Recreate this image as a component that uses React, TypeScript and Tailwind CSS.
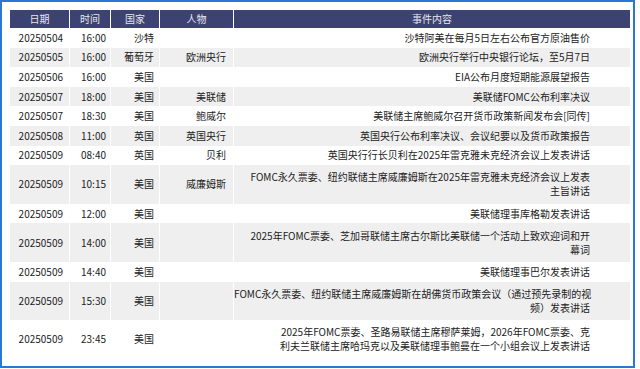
import React from "react"

type Row = {
  date: string
  time: string
  country: string
  person: string
  event: string[]
}

const rows: Row[] = [
  { date: "20250504", time: "16:00", country: "沙特", person: "", event: ["沙特阿美在每月5日左右公布官方原油售价"] },
  { date: "20250505", time: "16:00", country: "葡萄牙", person: "欧洲央行", event: ["欧洲央行举行中央银行论坛，至5月7日"] },
  { date: "20250506", time: "16:00", country: "美国", person: "", event: ["EIA公布月度短期能源展望报告"] },
  { date: "20250507", time: "18:00", country: "美国", person: "美联储", event: ["美联储FOMC公布利率决议"] },
  { date: "20250507", time: "18:30", country: "美国", person: "鲍威尔", event: ["美联储主席鲍威尔召开货币政策新闻发布会[同传]"] },
  { date: "20250508", time: "11:00", country: "英国", person: "英国央行", event: ["英国央行公布利率决议、会议纪要以及货币政策报告"] },
  { date: "20250509", time: "08:40", country: "英国", person: "贝利", event: ["英国央行行长贝利在2025年雷克雅未克经济会议上发表讲话"] },
  {
    date: "20250509",
    time: "10:15",
    country: "美国",
    person: "威廉姆斯",
    event: ["FOMC永久票委、纽约联储主席威廉姆斯在2025年雷克雅未克经济会议上发表", "主旨讲话"],
  },
  { date: "20250509", time: "12:00", country: "美国", person: "", event: ["美联储理事库格勒发表讲话"] },
  {
    date: "20250509",
    time: "14:00",
    country: "美国",
    person: "",
    event: ["2025年FOMC票委、芝加哥联储主席古尔斯比美联储一个活动上致欢迎词和开", "幕词"],
  },
  { date: "20250509", time: "14:40", country: "美国", person: "", event: ["美联储理事巴尔发表讲话"] },
  {
    date: "20250509",
    time: "15:30",
    country: "美国",
    person: "",
    event: ["FOMC永久票委、纽约联储主席威廉姆斯在胡佛货币政策会议（通过预先录制的视", "频）发表讲话"],
  },
  {
    date: "20250509",
    time: "23:45",
    country: "美国",
    person: "",
    event: ["2025年FOMC票委、圣路易联储主席穆萨莱姆，2026年FOMC票委、克", "利夫兰联储主席哈玛克以及美联储理事鲍曼在一个小组会议上发表讲话"],
  },
]

export default function App() {
  return (
    <div className="w-[640px] h-[369px] bg-white">
      <div
        className="w-[635px] h-[368px] border-2 border-[#2a78d6] pl-2 pt-2 pr-[3px] text-[10px] text-[#222]"
        style={{ fontFamily: '"Noto Sans CJK SC", "Liberation Sans", sans-serif' }}
      >
        <table className="w-[620px] table-fixed border-separate border-spacing-0">
          <colgroup>
            <col className="w-[59px]" />
            <col className="w-[41px]" />
            <col className="w-[49px]" />
            <col className="w-[74px]" />
            <col />
          </colgroup>
          <thead>
            <tr className="h-[18px] bg-[#3c4272] text-[#e6e7ef]">
              <th className="font-normal text-center leading-[12px]">日期</th>
              <th className="font-normal text-center leading-[12px] border-l border-white">时间</th>
              <th className="font-normal text-center leading-[12px] border-l border-white">国家</th>
              <th className="font-normal text-center leading-[12px] border-l border-white">人物</th>
              <th className="font-normal text-center leading-[12px] border-l border-white">事件内容</th>
            </tr>
          </thead>
          <tbody>
            {rows.map((r, i) => {
              const tall = r.event.length > 1
              const bg = i % 2 === 1 ? "bg-[#efefef]" : "bg-white"
              return (
                <tr key={i} className={`${tall ? "h-[38.6px]" : "h-[19.6px]"} ${bg}`}>
                  <td className="text-right pr-[6px] leading-[12px]">{r.date}</td>
                  <td className="text-right pr-[4px] leading-[12px] border-l border-white">{r.time}</td>
                  <td className="text-right pr-[5px] leading-[12px] border-l border-white">{r.country}</td>
                  <td className="text-right pr-[7px] leading-[12px] border-l border-white">{r.person}</td>
                  <td className="text-right pr-[40px] leading-[14px] border-l border-white whitespace-nowrap">
                    {r.event.map((line, j) => (
                      <div key={j}>{line}</div>
                    ))}
                  </td>
                </tr>
              )
            })}
          </tbody>
        </table>
      </div>
    </div>
  )
}
